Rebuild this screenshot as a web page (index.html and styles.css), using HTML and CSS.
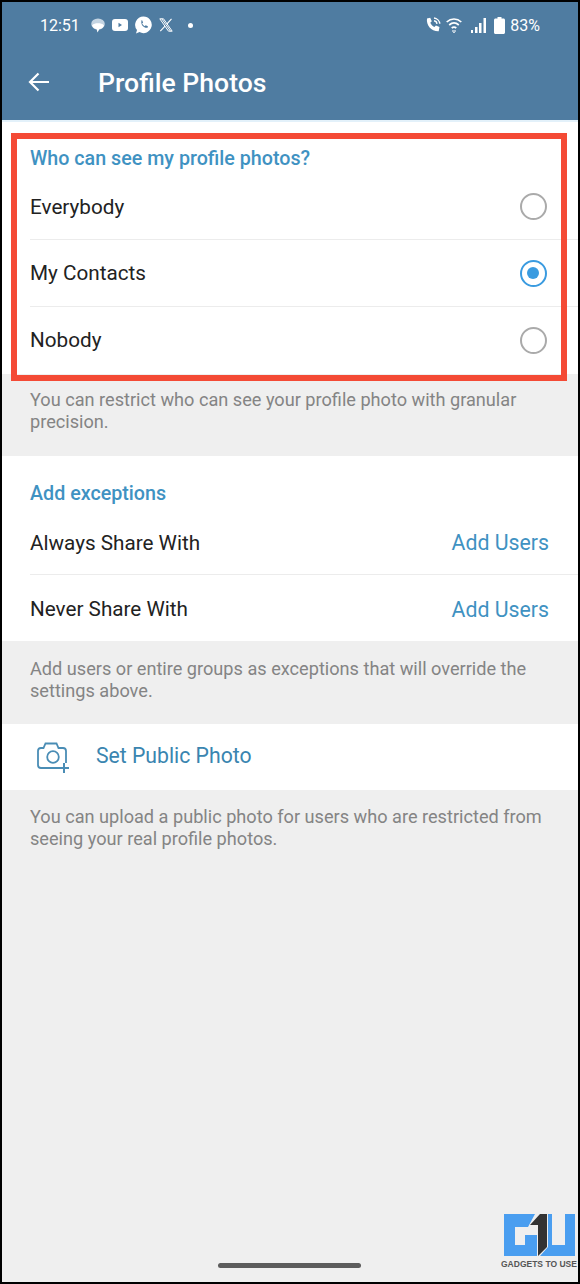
FILE: index.html
```html
<!DOCTYPE html>
<html lang="en">
<head>
    <meta charset="UTF-8">
    <meta name="viewport" content="width=device-width, initial-scale=1.0">
    <title>Profile Photos</title>
    <link rel="stylesheet" href="styles.css">
</head>
<body>
    <div class="phone">
        <header class="appbar">
            <div class="statusbar">
                <div class="status-left">
                    <span class="time">12:51</span>
                    <svg class="ic-chat" width="14" height="15" viewBox="0 0 14 15"><ellipse cx="7" cy="6" rx="6.800" ry="5.500" fill="#c4d4e2"/><path d="M1 7.500c1.500-1.800 3.500-2.200 6-2.200s4.500.4 6 2.200c-.5 2-2.500 3.300-4.500 3.500L6.500 14.500 5.500 11C3.500 10.800 1.800 9.500 1 7.500z" fill="#fff"/></svg>
                    <svg class="ic-yt" width="16" height="12" viewBox="0 0 16 12"><rect width="16" height="12" rx="3" fill="#fff"/><path d="M6.500 3.800v4.400L10 6z" fill="#4f7ca1"/></svg>
                    <svg class="ic-wa" width="17" height="18" viewBox="0 0 17 18"><path d="M8.500.5a8.300 8.300 0 1 1-4 15.600L1 17.500l1-3.500A8.300 8.300 0 0 1 8.500.5z" fill="#fff"/><path d="M5.500 4.500l1.600-.3 1 2.300-1 1c.5 1.200 1.400 2.100 2.600 2.700l1-1 2.200 1-.3 1.600c-3.700.5-7.300-3-6.100-7.300z" fill="#4f7ca1"/></svg>
                    <svg class="ic-x" width="14" height="14" viewBox="0 0 14 14"><path d="M.8.8h3.700l8.700 12.400H9.500zM2.800.8l8.700 12.400" fill="none" stroke="#fff" stroke-width="1"/><path d="M12.500.8L7.800 6.200M6 8.200L1.300 13.200" fill="none" stroke="#fff" stroke-width="1.100"/></svg>
                    <span class="dot"></span>
                </div>
                <div class="status-right">
                    <svg class="ic-call" width="15" height="16" viewBox="0 0 15 16"><path d="M1 1.500l3.200-.8 1.600 3.600-1.500 1.500c.8 1.900 2.200 3.300 4.100 4.100l1.500-1.500 3.600 1.600-.8 4.200C5.500 14.500 0 8.500 1 1.500z" fill="#fff"/><path d="M8 1c3 .3 5.500 2.800 5.800 5.800M8 3.800c1.500.2 2.800 1.500 3 3" fill="none" stroke="#fff" stroke-width="1.400"/></svg>
                    <svg class="ic-wifi" width="16" height="16" viewBox="0 0 16 16"><path d="M.7 5c4.300-4 10.300-4 14.600 0M3.200 8c3-2.600 6.600-2.600 9.600 0M5.700 11c1.500-1.200 3.100-1.200 4.600 0" fill="none" stroke="#fff" stroke-width="1.700"/><path d="M6.300 13.300h1.400v1.400H6.300zM8.300 13.300h1.400v1.400H8.300zM7.300 15h1.400v1H7.300z" fill="#fff"/></svg>
                    <svg class="ic-signal" width="15" height="15" viewBox="0 0 15 15"><path d="M0 12h2v3H0zM4 9h2.500v6H4zM8 5h2.500v10H8zM12.500 0H15v15h-2.500z" fill="#fff"/></svg>
                    <svg class="ic-batt" width="11" height="17" viewBox="0 0 11 17"><path d="M3.500 0h4v1.500h2c.8 0 1.500.7 1.500 1.500v12.500c0 .8-.7 1.500-1.500 1.500h-8C.7 17 0 16.300 0 15.500V3c0-.8.7-1.500 1.500-1.500h2z" fill="#fff"/></svg>
                    <span class="battery">83%</span>
                </div>
            </div>
            <div class="titlebar">
                <svg class="back" width="22" height="20" viewBox="0 0 22 20"><path d="M21 10H2M10.500 1.500L2 10l8.500 8.500" fill="none" stroke="#fff" stroke-width="2.200"/></svg>
                <h1>Profile Photos</h1>
            </div>
        </header>

        <section class="card card-privacy">
            <h2>Who can see my profile photos?</h2>
            <div class="row radio-row first"><span>Everybody</span><i class="radio"></i></div>
            <div class="row radio-row"><span>My Contacts</span><i class="radio on"></i></div>
            <div class="row radio-row"><span>Nobody</span><i class="radio"></i></div>
        </section>
        <p class="hint hint-one">You can restrict who can see your profile photo with granular precision.</p>

        <section class="card card-exceptions">
            <h2>Add exceptions</h2>
            <div class="row link-row first"><span>Always Share With</span><a class="add">Add Users</a></div>
            <div class="row link-row"><span>Never Share With</span><a class="add">Add Users</a></div>
        </section>
        <p class="hint hint-two">Add users or entire groups as exceptions that will override the settings above.</p>

        <section class="card public-photo">
            <svg width="40" height="36" viewBox="0 0 40 36"><path d="M28 29H10c-1.700 0-3-1.300-3-3V12c0-1.700 1.300-3 3-3h2.500l2-4.500h11l2 4.500H32c1.700 0 3 1.300 3 3v12" fill="none" stroke="#4a8db5" stroke-width="1.800"/><circle cx="22" cy="18" r="5.800" fill="none" stroke="#4a8db5" stroke-width="1.800"/><path d="M33 24v10M28 29h10" fill="none" stroke="#4a8db5" stroke-width="2"/></svg>
            <span>Set Public Photo</span>
        </section>
        <p class="hint hint-three">You can upload a public photo for users who are restricted from seeing your real profile photos.</p>

        <div class="home-bar"></div>

        <div class="highlight"></div>

        <div class="watermark">
            <svg width="72" height="42" viewBox="0 0 72 42">
                <path d="M0 0h31l-7 13H11v18h10V21h12v21H0z" fill="#4a9ef0"/>
                <path d="M44 0h4v31h13V0h10v42H36l8-9z" fill="#4a9ef0"/>
                <path d="M26 11L36 0h7v33l-9 9V11z" fill="#333"/>
            </svg>
            <span>GADGETS TO USE</span>
        </div>
    </div>
</body>
</html>
```
FILE: styles.css
```css
* {
    margin: 0;
    padding: 0;
    box-sizing: border-box;
}

html, body {
    width: 580px;
    height: 1284px;
    overflow: hidden;
    background: #000;
}

body {
    padding: 2px;
    font-family: Roboto, "Liberation Sans", sans-serif;
}

.phone {
    position: relative;
    width: 576px;
    height: 1280px;
    background: #efefef;
    overflow: hidden;
}

.appbar {
    height: 118px;
    background: #4f7ca1;
    color: #fff;
}

.statusbar {
    height: 46px;
    padding: 0 38px;
    display: flex;
    justify-content: space-between;
    align-items: center;
    font-size: 16px;
}

.status-left, .status-right {
    display: flex;
    align-items: center;
}

.time {
    margin-right: 11px;
}

.status-left svg {
    margin-right: 7px;
}

.dot {
    width: 5px;
    height: 5px;
    border-radius: 50%;
    background: #fff;
    margin-left: 8px;
}

.status-right svg {
    margin-right: 5px;
}

.status-right .ic-signal {
    margin-left: 4px;
    margin-right: 8px;
}

.titlebar {
    height: 68px;
    display: flex;
    align-items: center;
    padding-left: 26px;
}

.back {
    margin-right: 48px;
}

h1 {
    font-size: 26.600px;
    font-weight: 500;
}

.card {
    background: #fff;
    padding-left: 28px;
}

.card h2 {
    font-size: 19.700px;
    line-height: 23px;
    font-weight: 500;
    color: #3f92c2;
    margin-bottom: 4px;
}

.card-privacy {
    height: 254px;
    padding-top: 25px;
    border-top: 2px solid #e3f1fa;
}

.card-exceptions {
    height: 185px;
    padding-top: 26px;
}

.row {
    height: 67px;
    display: flex;
    align-items: center;
    justify-content: space-between;
    font-size: 20.700px;
    color: #222;
    border-top: 1px solid #ececec;
    padding-right: 29px;
}

.row.first {
    border-top: none;
    height: 65px;
}

.link-row {
    padding-top: 2px;
}

.radio {
    width: 27px;
    height: 27px;
    border-radius: 50%;
    border: 2.500px solid #aaa;
    margin-right: 2px;
}

.radio.on {
    border-color: #3a9be0;
    position: relative;
}

.radio.on::after {
    content: "";
    position: absolute;
    left: 5px;
    top: 5px;
    width: 12px;
    height: 12px;
    border-radius: 50%;
    background: #3a9be0;
}

.add {
    color: #3f92c2;
    font-size: 21.300px;
}

.hint {
    font-size: 18.150px;
    line-height: 22px;
    color: #848484;
    padding: 15px 28px 0;
}

.hint-one {
    height: 82px;
}

.hint-two {
    height: 83px;
    padding-top: 17px;
}

.hint-three {
    padding-top: 16px;
}

.public-photo {
    height: 66px;
    display: flex;
    align-items: center;
    color: #3a85b0;
    font-size: 21.200px;
}

.public-photo svg {
    margin-left: 1px;
}

.public-photo span {
    margin-left: 25px;
    padding-bottom: 3px;
}

.home-bar {
    position: absolute;
    left: 216px;
    bottom: 14px;
    width: 143px;
    height: 5px;
    border-radius: 3px;
    background: #5c5c5c;
}

.highlight {
    position: absolute;
    left: 9px;
    top: 131px;
    width: 556px;
    height: 248px;
    border: 6px solid #f44a35;
}

.watermark {
    position: absolute;
    left: 502px;
    top: 1212px;
    width: 74px;
    white-space: nowrap;
}

.watermark svg {
    display: block;
}

.watermark span {
    display: block;
    font-family: "Liberation Sans", sans-serif;
    font-weight: 700;
    font-size: 8.500px;
    line-height: 9px;
    margin: 4px 0 0 -3px;
    color: #555;
}
```
